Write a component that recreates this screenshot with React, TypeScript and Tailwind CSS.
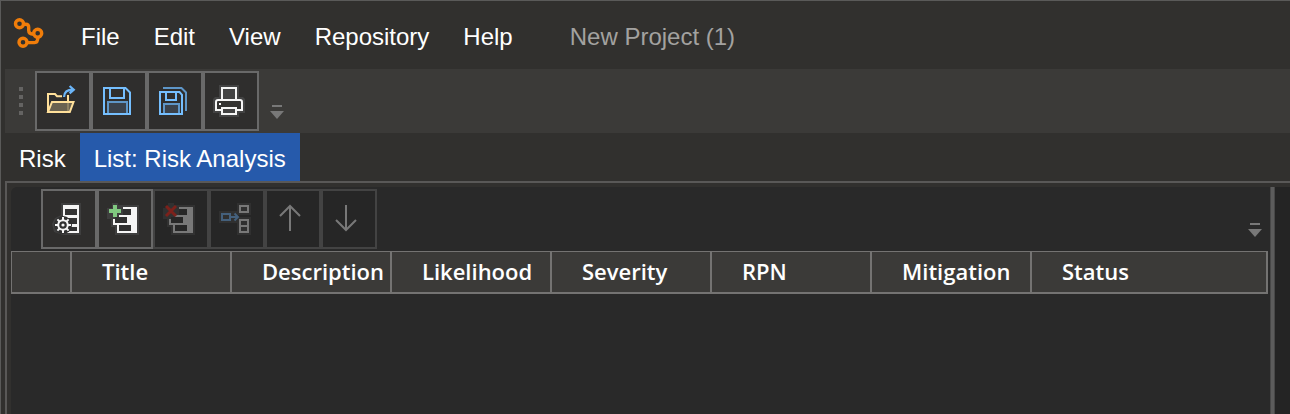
import type { ReactNode } from "react";

const menus = ["File", "Edit", "View", "Repository", "Help"];
const columns = ["Title", "Description", "Likelihood", "Severity", "RPN", "Mitigation"];

function Logo() {
  return (
    <svg width="34" height="34" viewBox="12 16 34 34" fill="none" stroke="#f07d0a" strokeWidth="3.4" aria-hidden="true">
      <circle cx="19.5" cy="23.7" r="4" />
      <circle cx="37.7" cy="33.3" r="4" />
      <circle cx="23" cy="42.3" r="4" />
      <path d="M23.5 24.3h2.2q3 0 3 3v3.2q0 3.6 5 3.7" />
      <path d="M27 42.6h7.6q3.2 0 3.2-5" />
    </svg>
  );
}

function Icon({ children }: { children: ReactNode }) {
  return (
    <svg width="32" height="32" viewBox="0 0 32 32" fill="none" aria-hidden="true">
      {children}
    </svg>
  );
}

function OpenIcon() {
  return (
    <Icon>
      <path d="M3 27V9h7l2 2.2h5M23 10v6" stroke="#ffe09a" strokeWidth="2" />
      <path d="M7 17h21.5L24.8 27H3z" fill="#6a6250" stroke="#ffe09a" strokeWidth="2" />
      <path d="M23 18v8" stroke="#8f8263" strokeWidth="2" />
      <path d="M19 12c.2-5 3-7.4 9-7.4M24.6 1l4.2 3.7-4.2 3.7" stroke="#6bb5f8" strokeWidth="2.2" />
    </Icon>
  );
}

function SaveIcon() {
  return (
    <Icon>
      <path d="M7 29V17h19v12" fill="#3b424b" stroke="#5e96c8" strokeWidth="2" />
      <path d="M3 3h21.5L29 7.5V29H3zM9 3v10h14V3" stroke="#75bfff" strokeWidth="2" />
    </Icon>
  );
}

function SaveAllIcon() {
  return (
    <Icon>
      <path d="M6 3h18.5L29 7.5V26" stroke="#5e96c8" strokeWidth="2" />
      <path d="M7 29V19h15v10" fill="#3b424b" stroke="#5e96c8" strokeWidth="2" />
      <path d="M3 7h19.5L25 9.8V29H3zM9 7v8h10V7" stroke="#75bfff" strokeWidth="2" />
    </Icon>
  );
}

function PrintIcon() {
  return (
    <Icon>
      <path d="M6 0h20v12h4l2 2v14h-6v4H6v-4H0V14l2-2h4z" fill="#434343" />
      <path d="M9 15V3h14v12" stroke="#f5f5f5" strokeWidth="2" />
      <path d="M9 25H3v-8q0-2 2-2h22q2 0 2 2v8h-6" fill="#333230" stroke="#f5f5f5" strokeWidth="2" />
      <path d="M9 23h14v6H9z" fill="#434343" stroke="#f5f5f5" strokeWidth="2" />
      <path d="M6 18h2v2H6z" fill="#f5f5f5" />
    </Icon>
  );
}

function ConfigureIcon() {
  return (
    <Icon>
      <path d="M10 0h20v32H12l-9-3-2-8 3-6 6-3z" fill="#3e3e3e" />
      <path d="M12 2h16v28H12z" fill="#f5f5f5" />
      <path d="M14 6h12v6H14zM14 15h12v6H14zM14 24h12v4H14z" fill="#333" />
      <circle cx="12" cy="22" r="9" fill="#303030" />
      <circle cx="12" cy="22" r="4.8" stroke="#f5f5f5" strokeWidth="2" />
      <path
        d="M12 14v3M12 27v3M4 22h3M17 22h3M6.4 16.4l2.1 2.1M15.5 25.5l2.1 2.1M6.4 27.6l2.1-2.1M15.5 18.5l2.1-2.1"
        stroke="#f5f5f5"
        strokeWidth="2"
      />
      <circle cx="12" cy="22" r="1.6" fill="#f5f5f5" />
    </Icon>
  );
}

const rowsPath = "M16 4h14v26H10v-8H6v-6h2v4h12v-6h-8v-2h12V6h-8zM12 22v6h12v-6z";
const rowsHalo = "M5 0h6v2h21v30H8v-8H4v-8H0V5h5z";

function AddRowIcon() {
  return (
    <Icon>
      <path d={rowsHalo} fill="#3e3e3e" />
      <path d="M16 6h8v6h-8zM8 14h12v6H8zM12 22h12v6H12z" fill="#303030" />
      <path d={rowsPath} fill="#f5f5f5" fillRule="evenodd" />
      <path d="M6 2h4v4h4v4h-4v4H6v-4H2V6h4z" fill="#80c880" />
    </Icon>
  );
}

function DeleteRowIcon() {
  return (
    <Icon>
      <path d={rowsHalo} fill="#313131" />
      <path d="M16 6h8v6h-8zM8 14h12v6H8zM12 22h12v6H12z" fill="#272727" />
      <path d={rowsPath} fill="#787878" fillRule="evenodd" />
      <path d="M3 3l10 10M13 3L3 13" stroke="#7c211b" strokeWidth="3" />
    </Icon>
  );
}

function LinkRowIcon() {
  return (
    <Icon>
      <path d="M18 0h14v12H18zM18 14h14v18H18zM0 8h18v12H0z" fill="#303030" />
      <path d="M3 11h8v6H3zM12 14h7M15.5 10.5L19 14l-3.5 3.5" stroke="#44607c" strokeWidth="2" />
      <path d="M21 3h8v6h-8zM21 17h8v12h-8zM21 23h8" stroke="#787878" strokeWidth="2" />
    </Icon>
  );
}

function UpIcon() {
  return (
    <Icon>
      <path d="M15 28V3M5 13L15 3l10 10" stroke="#787878" strokeWidth="2" />
    </Icon>
  );
}

function DownIcon() {
  return (
    <Icon>
      <path d="M15 2v25M5 17l10 10 10-10" stroke="#787878" strokeWidth="2" />
    </Icon>
  );
}

function ToolButton({ label, disabled, children }: { label: string; disabled?: boolean; children: ReactNode }) {
  return (
    <button
      type="button"
      aria-label={label}
      disabled={disabled}
      className="flex h-[60px] w-14 shrink-0 items-center border-2 border-[#696969] bg-[#2f2e2d] pl-2 disabled:border-[#434343] disabled:bg-[#262626]"
    >
      {children}
    </button>
  );
}

function Overflow() {
  return (
    <button type="button" aria-label="Toolbar options" className="shrink-0">
      <svg width="14" height="16" viewBox="0 0 14 16" fill="#787878" aria-hidden="true">
        <path d="M2 0h10v2H2zM0 6h14l-7 8z" />
      </svg>
    </button>
  );
}

export default function App() {
  return (
    <div className="flex min-h-screen flex-col border-t border-l border-[#5a5a59] bg-[#31302e] pl-1 font-['Liberation_Sans',Arial,sans-serif] text-2xl text-white">
      <header className="flex h-[68px] items-start">
        <div className="mt-[15px] ml-[7px] shrink-0">
          <Logo />
        </div>
        <nav className="mt-5 ml-[35px] flex gap-[34px] leading-8">
          {menus.map((name) => (
            <button key={name} type="button">
              {name}
            </button>
          ))}
        </nav>
        <h1 className="mt-5 ml-[57px] leading-8 whitespace-nowrap text-[#a3a2a0]">New Project (1)</h1>
      </header>

      <div role="toolbar" aria-label="Main" className="flex h-16 items-center bg-[#3b3a38] pl-[14px]">
        <div className="mr-3 flex flex-col gap-1">
          <span className="size-1 bg-[#646362]" />
          <span className="size-1 bg-[#646362]" />
          <span className="size-1 bg-[#646362]" />
          <span className="size-1 bg-[#646362]" />
        </div>
        <ToolButton label="Open">
          <OpenIcon />
        </ToolButton>
        <ToolButton label="Save">
          <SaveIcon />
        </ToolButton>
        <ToolButton label="Save all">
          <SaveAllIcon />
        </ToolButton>
        <ToolButton label="Print">
          <PrintIcon />
        </ToolButton>
        <div className="ml-[11px] flex items-end self-end pb-3">
          <Overflow />
        </div>
      </div>

      <div role="tablist" className="flex h-12 items-stretch">
        <button type="button" role="tab" aria-selected="false" className="px-[14px] pt-1">
          Risk
        </button>
        <button type="button" role="tab" aria-selected="true" className="bg-[#265aab] px-[14px] pt-1">
          List: Risk Analysis
        </button>
      </div>

      <main className="flex flex-1 border-t-2 border-l-2 border-[#595857] pt-1 pl-1">
        <section className="min-w-0 flex-1 rounded-tl-md bg-[#292929]">
          <div role="toolbar" aria-label="List" className="flex pt-0.5 pr-2 pb-0.5 pl-[30px]">
            <ToolButton label="Configure columns">
              <ConfigureIcon />
            </ToolButton>
            <ToolButton label="Add row">
              <AddRowIcon />
            </ToolButton>
            <ToolButton label="Delete row" disabled>
              <DeleteRowIcon />
            </ToolButton>
            <ToolButton label="Link row" disabled>
              <LinkRowIcon />
            </ToolButton>
            <ToolButton label="Move up" disabled>
              <UpIcon />
            </ToolButton>
            <ToolButton label="Move down" disabled>
              <DownIcon />
            </ToolButton>
            <div className="ml-auto flex self-end pb-2.5">
              <Overflow />
            </div>
          </div>
          <div className="pr-0.5">
            <table className="w-full table-fixed border-separate border-spacing-0 border-t border-b-2 border-l border-[#747372] bg-[#3b3a38] font-['Open_Sans','Noto_Sans',sans-serif] text-[22px] leading-[38px]">
              <thead>
                <tr>
                  <th scope="col" aria-label="Row" className="w-[60px] border-r-2 border-[#747372] p-0" />
                  {columns.map((name) => (
                    <th
                      key={name}
                      scope="col"
                      className="w-40 border-r-2 border-[#747372] p-0 pb-0.5 pl-[30px] text-left font-semibold whitespace-nowrap"
                    >
                      {name}
                    </th>
                  ))}
                  <th scope="col" className="border-r-2 border-[#747372] p-0 pb-0.5 pl-[30px] text-left font-semibold">
                    Status
                  </th>
                </tr>
              </thead>
            </table>
          </div>
        </section>
        <div role="separator" aria-orientation="vertical" className="w-[5px] border-x border-[#484848] bg-[#5c5c5c]" />
        <aside className="w-[15px] bg-[#242424]" />
      </main>
    </div>
  );
}
